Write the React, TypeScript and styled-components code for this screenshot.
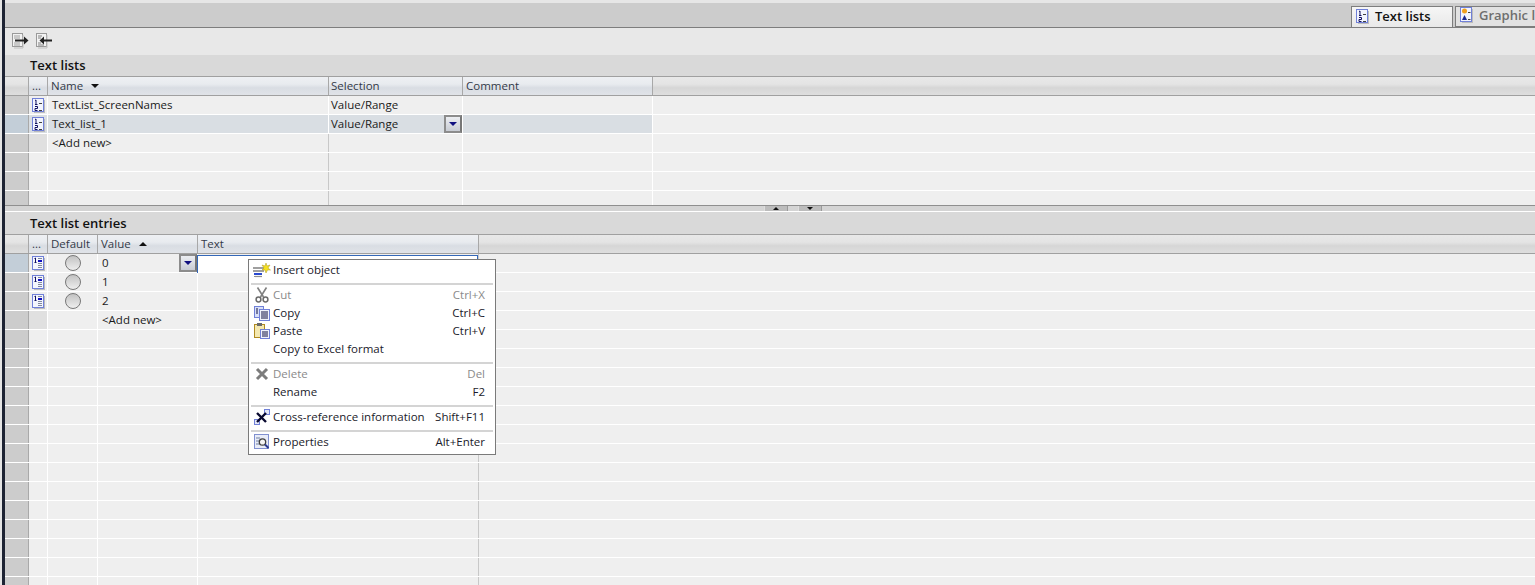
import React from 'react';
import { styled, createGlobalStyle } from 'styled-components';

const GlobalStyle = createGlobalStyle`
  html, body {
    margin: 0;
    padding: 0;
    height: 100%;
    overflow: hidden;
    background: #efefef;
  }
  * { box-sizing: border-box; }
`;

const Page = styled.div`
  position: relative;
  display: flex;
  width: 1535px;
  height: 585px;
  overflow: hidden;
  font-family: 'Open Sans', 'Noto Sans', sans-serif;
  font-size: 11.5px;
  color: #1a1a1a;
`;

const EdgeStripe = styled.div`
  width: 5px;
  flex: none;
  background: #1d2333;
  border-left: 2px solid #e4e4e4;
`;

const Main = styled.div`
  flex: 1;
  min-width: 0;
  display: flex;
  flex-direction: column;
`;

const TabStrip = styled.div`
  height: 28px;
  flex: none;
  background: #cccccc;
  border-top: 3px solid #e6e6e6;
  border-bottom: 1px solid #7d7d7d;
  display: flex;
  justify-content: flex-start;
  align-items: flex-end;
  padding-left: 1346px;
  overflow: hidden;
`;

const Tab = styled.div<{ $active?: boolean }>`
  flex: none;
  height: ${p => (p.$active ? '22px' : '21px')};
  width: ${p => (p.$active ? '102px' : '90px')};
  margin-left: ${p => (p.$active ? '0' : '2px')};
  margin-bottom: ${p => (p.$active ? '-1px' : '0')};
  padding: 0 0 3px 4px;
  display: flex;
  align-items: center;
  gap: 6px;
  font-size: 13px;
  font-weight: 600;
  color: ${p => (p.$active ? '#111111' : '#6e6e6e')};
  background: ${p => (p.$active ? 'linear-gradient(#f6f6f6, #e8e8e8)' : '#e2e2e2')};
  border: 1px solid #7d7d7d;
  border-bottom: ${p => (p.$active ? 'none' : '1px solid #7d7d7d')};
  white-space: nowrap;

  svg {
    flex: none;
  }
`;

const Toolbar = styled.div`
  height: 27px;
  flex: none;
  background: #e8e8e8;
  display: flex;
  align-items: center;
  gap: 7px;
  padding: 0 0 1px 7px;
`;

const SectionTitle = styled.div<{ $lower?: boolean }>`
  height: ${p => (p.$lower ? '22px' : '21px')};
  flex: none;
  background: #d9d9d9;
  padding: ${p => (p.$lower ? '1px' : '0')} 0 0 25px;
  font-size: 13px;
  font-weight: 600;
  line-height: 21px;
  color: #111111;
`;

const HeaderRow = styled.div`
  height: 20px;
  flex: none;
  display: flex;
  border-top: 1px solid #a0a0a0;
  border-bottom: 1px solid #a0a0a0;
  background: linear-gradient(#e8e8e8 0%, #e4e4e4 40%, #d6d6d6 60%, #dedede 100%);
`;

const HeaderCell = styled.div<{ $w: number; $tint?: boolean; $pad?: number }>`
  flex: none;
  width: ${p => p.$w}px;
  height: 100%;
  padding-left: ${p => p.$pad ?? 3}px;
  display: flex;
  align-items: center;
  gap: 8px;
  line-height: 18px;
  color: #333a48;
  border-right: 1px solid #a8a8a8;
  background: ${p => (p.$tint ? 'linear-gradient(#eef0f3 0%, #e8ebef 40%, #d9dde3 60%, #e0e3e8 100%)' : 'transparent')};
`;

const Rows = styled.div<{ $h: number }>`
  height: ${p => p.$h}px;
  flex: none;
  overflow: hidden;
`;

const Row = styled.div`
  height: 19px;
  display: flex;
  border-bottom: 1px solid #ffffff;
  background: #efefef;
`;

const Handle = styled.div<{ $selected?: boolean }>`
  flex: none;
  width: 24px;
  background: ${p => (p.$selected ? '#c3ced8' : '#cccccc')};
  border-right: 1px solid #a9a9a9;
`;

const Cell = styled.div<{ $w: number; $selected?: boolean; $shade?: boolean; $edge?: boolean; $pad?: number }>`
  position: relative;
  flex: none;
  width: ${p => p.$w}px;
  height: 100%;
  padding-left: ${p => p.$pad ?? 3}px;
  display: flex;
  align-items: center;
  line-height: 18px;
  white-space: nowrap;
  border-right: 1px solid ${p => (p.$edge ? '#c8c8c8' : '#ffffff')};
  background: ${p => (p.$selected ? '#d9dee3' : p.$shade ? '#e0e0e0' : '#efefef')};
`;

const CenterCell = styled(Cell)`
  padding-left: 0;
  justify-content: center;
`;

const DropButton = styled.div`
  position: absolute;
  right: 0;
  top: 0;
  width: 18px;
  height: 18px;
  display: flex;
  align-items: center;
  justify-content: center;
  border: 2px solid #8c8c8c;
  border-right-color: #777777;
  background: linear-gradient(#eceef2, #c8ccd4);
`;

const DownMark = styled.div<{ $color?: string }>`
  width: 0;
  height: 0;
  border-left: 4px solid transparent;
  border-right: 4px solid transparent;
  border-top: 4px solid ${p => p.$color ?? '#101080'};
`;

const UpMark = styled.div`
  width: 0;
  height: 0;
  border-left: 4px solid transparent;
  border-right: 4px solid transparent;
  border-bottom: 4px solid #111111;
`;

const Splitter = styled.div`
  height: 7px;
  flex: none;
  background: #d4d4d4;
  border-top: 1px solid #8f8f8f;
  border-bottom: 1px solid #ffffff;
  display: flex;
  justify-content: center;
  gap: 10px;
  padding-left: 46px;
`;

const SplitButton = styled.div`
  width: 24px;
  height: 5px;
  display: flex;
  align-items: center;
  justify-content: center;
  background: #bcbcbc;
  border-left: 1px solid #dddddd;
  border-right: 1px solid #9a9a9a;
`;

const SmallUp = styled.div`
  width: 0;
  height: 0;
  border-left: 3px solid transparent;
  border-right: 3px solid transparent;
  border-bottom: 3px solid #111111;
`;

const SmallDown = styled.div`
  width: 0;
  height: 0;
  border-left: 3px solid transparent;
  border-right: 3px solid transparent;
  border-top: 3px solid #111111;
`;

const Radio = styled.div`
  width: 16px;
  height: 16px;
  border-radius: 50%;
  border: 1px solid #777777;
  background: linear-gradient(#c2c2c2, #eeeeee);
`;

const TextInput = styled.div`
  position: absolute;
  left: -1px;
  top: 1px;
  width: 281px;
  height: 19px;
  background: #ffffff;
  border: 1px solid #3468b8;
`;

const Menu = styled.div`
  position: absolute;
  left: 248px;
  top: 259px;
  width: 248px;
  height: 196px;
  background: #ffffff;
  border: 1px solid #7a7a7a;
  padding: 0 2px;
  color: #1a1a2a;
`;

const MenuItem = styled.div<{ $disabled?: boolean }>`
  height: 18px;
  display: flex;
  align-items: center;
  padding-left: 22px;
  padding-right: 8px;
  position: relative;
  color: ${p => (p.$disabled ? '#8a8a8a' : '#1a1a2a')};
`;

const MenuIcon = styled.span`
  position: absolute;
  left: 2px;
  top: 1px;
  width: 18px;
  height: 18px;
  display: flex;
  align-items: center;
  justify-content: center;
`;

const MenuLabel = styled.span`
  flex: 1;
  white-space: nowrap;
`;

const MenuShortcut = styled.span`
  white-space: nowrap;
`;

const MenuRule = styled.div`
  height: 2px;
  background: #d4d4d4;
  margin-top: 5px;
`;

const NumberedListIcon = () => (
  <svg width="13" height="15" viewBox="0 0 13 15">
    <rect x="0.5" y="0.5" width="11" height="13" fill="#f2f4fd" stroke="#7080d8" />
    <path d="M12 2 H13 V15 H2 V14 H12 Z" fill="#bcbcbc" />
    <path d="M3 2.5 L4 2 V6 M3 6.5 H5.5" stroke="#101060" fill="none" />
    <path d="M3 8.5 H5.5 V10.5 H3 V12.5 H5.5" stroke="#101060" fill="none" />
    <path d="M7 5.5 H10 M7 12.5 H10" stroke="#404040" />
  </svg>
);

const EntryIcon = () => (
  <svg width="13" height="15" viewBox="0 0 13 15">
    <rect x="0.5" y="0.5" width="11" height="13" fill="#f4f6fd" stroke="#7080d8" />
    <path d="M12 2 H13 V15 H2 V14 H12 Z" fill="#bcbcbc" />
    <path d="M2.5 2.5 L3.5 2 V6 M2.5 6.5 H4.5" stroke="#101060" fill="none" />
    <rect x="6" y="4" width="4" height="2" fill="#1010c0" />
    <path d="M6 2.5 H10 M6 7.5 H10 M6 9.5 H10 M6 11.5 H10" stroke="#8088a0" />
  </svg>
);

const GraphicListIcon = () => (
  <svg width="13" height="16" viewBox="0 0 13 16">
    <rect x="0.5" y="0.5" width="11" height="14" fill="#f2f4fd" stroke="#7080d8" />
    <path d="M12 2 H13 V16 H2 V15 H12 Z" fill="#bcbcbc" />
    <circle cx="4.5" cy="4" r="2.5" fill="#f0a020" />
    <path d="M2 13 L4.5 8 L7 13 Z" fill="#1a2a90" />
    <path d="M8 5.5 H10.5 M8 12.5 H10.5" stroke="#404040" />
  </svg>
);

const ExportIcon = () => (
  <svg width="17" height="16" viewBox="0 0 17 16">
    <rect x="0.5" y="0.5" width="10" height="13" fill="#f2f2f2" stroke="#9a9a9a" />
    <path d="M11 2 V15 H2" stroke="#c0c0c0" fill="none" />
    <path d="M2 3 H8 M2 5 H8 M2 10 H8 M2 12 H8" stroke="#a0a0a0" />
    <path d="M3 7.5 H12" stroke="#222222" strokeWidth="2" />
    <path d="M12 3.5 L16.5 7.5 L12 11.5 Z" fill="#222222" />
  </svg>
);

const ImportIcon = () => (
  <svg width="17" height="16" viewBox="0 0 17 16">
    <rect x="0.5" y="0.5" width="10" height="13" fill="#f2f2f2" stroke="#9a9a9a" />
    <path d="M11 2 V15 H2" stroke="#c0c0c0" fill="none" />
    <path d="M2 3 H6 M2 5 H5 M2 10 H5 M2 12 H8" stroke="#808080" />
    <path d="M7 7.5 H16" stroke="#222222" strokeWidth="2" />
    <path d="M8 3.5 L3.5 7.5 L8 11.5 Z" fill="#222222" />
  </svg>
);

const InsertIcon = () => (
  <svg width="18" height="15" viewBox="0 0 18 15">
    <path d="M0 5 H11 M0 8 H11" stroke="#808080" strokeWidth="1.5" />
    <path d="M1 11 H9" stroke="#2a4ad0" strokeWidth="2" />
    <path d="M1 13.5 H9" stroke="#909090" strokeWidth="1.2" />
    <path d="M13 0 L14 3 L17 2 L15 5 L17.5 7 L14.5 7 L13 10 L12 7 L9 7 L11 5 L9 2 L12 3 Z" fill="#f4e020" stroke="#b09a20" strokeWidth="0.5" />
  </svg>
);

const CutIcon = () => (
  <svg width="14" height="16" viewBox="0 0 14 16">
    <path d="M2.5 0.5 L8.5 10 M11.5 0.5 L5.5 10" stroke="#808080" strokeWidth="1.6" fill="none" />
    <circle cx="3.5" cy="12.5" r="2.4" fill="none" stroke="#6a6a6a" strokeWidth="1.5" />
    <circle cx="10.5" cy="12.5" r="2.4" fill="none" stroke="#6a6a6a" strokeWidth="1.5" />
  </svg>
);

const CopyIcon = () => (
  <svg width="16" height="15" viewBox="0 0 16 15">
    <rect x="0.5" y="0.5" width="9" height="11" fill="#d8e0f8" stroke="#7080d8" />
    <path d="M2 3 H4 M2 5 H4 M2 7 H4" stroke="#101040" />
    <rect x="5.5" y="3.5" width="10" height="11" fill="#f0f3fc" stroke="#7080d8" />
    <path d="M7 6 H14 M7 8 H14 M7 10 H14 M7 12 H14" stroke="#101040" />
  </svg>
);

const PasteIcon = () => (
  <svg width="16" height="16" viewBox="0 0 16 16">
    <rect x="0.5" y="1.5" width="10" height="13" fill="#f4e8b0" stroke="#b08a20" />
    <rect x="3" y="0" width="5" height="3" fill="#6a6a6a" />
    <rect x="6.5" y="6.5" width="9" height="9" fill="#f0f3fc" stroke="#7080d8" />
    <path d="M8 9 H14 M8 11 H14 M8 13 H14" stroke="#101040" />
  </svg>
);

const DeleteIcon = () => (
  <svg width="14" height="14" viewBox="0 0 14 14">
    <path d="M2 2 L12 12 M12 2 L2 12" stroke="#7c7c7c" strokeWidth="3" />
  </svg>
);

const CrossRefIcon = () => (
  <svg width="16" height="16" viewBox="0 0 16 16">
    <rect x="10.5" y="0.5" width="5" height="5" fill="#e4e8f8" stroke="#7080d8" />
    <rect x="0.5" y="10.5" width="5" height="5" fill="#e4e8f8" stroke="#7080d8" />
    <path d="M3 4 L12 13 M12 4 L3 13" stroke="#0a0a30" strokeWidth="2.4" />
  </svg>
);

const PropertiesIcon = () => (
  <svg width="16" height="16" viewBox="0 0 16 16">
    <rect x="0.5" y="0.5" width="14" height="14" fill="#e8ecf8" stroke="#8090d0" />
    <path d="M2 4 H6 M2 7 H5 M2 10 H5" stroke="#7080a0" />
    <circle cx="8.5" cy="8" r="3.2" fill="#f4f4f4" stroke="#404040" strokeWidth="1.3" />
    <path d="M11 10.5 L14.5 14" stroke="#2a3a90" strokeWidth="2" />
  </svg>
);

const upperCols = [19, 281, 134, 190];
const lowerCols = [19, 50, 100, 281];

const App: React.FC = () => {
  const upperRows = [
    { name: 'TextList_ScreenNames', selection: 'Value/Range' },
    { name: 'Text_list_1', selection: 'Value/Range', selected: true },
    { name: '<Add new>', selection: '', add: true },
    { name: '', selection: '' },
    { name: '', selection: '' },
    { name: '', selection: '' },
  ];

  const lowerRows = ['0', '1', '2', '<Add new>', ...Array.from({ length: 14 }, () => '')];

  return (
    <Page>
      <GlobalStyle />
      <EdgeStripe />
      <Main>
        <TabStrip>
          <Tab $active>
            <NumberedListIcon />
            Text lists
          </Tab>
          <Tab>
            <GraphicListIcon />
            Graphic lists
          </Tab>
        </TabStrip>

        <Toolbar>
          <ExportIcon />
          <ImportIcon />
        </Toolbar>

        <SectionTitle>Text lists</SectionTitle>
        <HeaderRow>
          <HeaderCell $w={24} />
          <HeaderCell $w={upperCols[0]} $tint>...</HeaderCell>
          <HeaderCell $w={upperCols[1]} $tint>
            Name <DownMark $color="#111111" />
          </HeaderCell>
          <HeaderCell $w={upperCols[2]} $tint $pad={2}>Selection</HeaderCell>
          <HeaderCell $w={upperCols[3]} $tint>Comment</HeaderCell>
        </HeaderRow>
        <Rows $h={109}>
          {upperRows.map((row, i) => (
            <Row key={i}>
              <Handle $selected={row.selected} />
              <Cell $w={upperCols[0]} $selected={row.selected} $shade={row.add}>
                {i < 2 && <NumberedListIcon />}
              </Cell>
              <Cell $w={upperCols[1]} $selected={row.selected} $pad={4} $edge={i >= 2}>{row.name}</Cell>
              <Cell $w={upperCols[2]} $selected={row.selected} $pad={2}>
                {row.selection}
                {row.selected && (
                  <DropButton>
                    <DownMark />
                  </DropButton>
                )}
              </Cell>
              <Cell $w={upperCols[3]} $selected={row.selected} />
            </Row>
          ))}
        </Rows>

        <Splitter>
          <SplitButton><SmallUp /></SplitButton>
          <SplitButton><SmallDown /></SplitButton>
        </Splitter>

        <SectionTitle $lower>Text list entries</SectionTitle>
        <HeaderRow>
          <HeaderCell $w={24} />
          <HeaderCell $w={lowerCols[0]} $tint>...</HeaderCell>
          <HeaderCell $w={lowerCols[1]} $tint>Default</HeaderCell>
          <HeaderCell $w={lowerCols[2]} $tint>
            Value <UpMark />
          </HeaderCell>
          <HeaderCell $w={lowerCols[3]} $tint>Text</HeaderCell>
        </HeaderRow>
        <Rows $h={331}>
          {lowerRows.map((value, i) => (
            <Row key={i}>
              <Handle $selected={i === 0} />
              <Cell $w={lowerCols[0]} $shade={i === 3}>
                {i < 3 && <EntryIcon />}
              </Cell>
              <CenterCell $w={lowerCols[1]}>{i < 3 && <Radio />}</CenterCell>
              <Cell $w={lowerCols[2]} $pad={4}>
                {value}
                {i === 0 && (
                  <DropButton>
                    <DownMark />
                  </DropButton>
                )}
              </Cell>
              <Cell $w={lowerCols[3]} $edge>{i === 0 && <TextInput />}</Cell>
            </Row>
          ))}
        </Rows>
      </Main>

      <Menu>
        <MenuItem>
          <MenuIcon><InsertIcon /></MenuIcon>
          <MenuLabel>Insert object</MenuLabel>
        </MenuItem>
        <MenuRule />
        <MenuItem $disabled>
          <MenuIcon><CutIcon /></MenuIcon>
          <MenuLabel>Cut</MenuLabel>
          <MenuShortcut>Ctrl+X</MenuShortcut>
        </MenuItem>
        <MenuItem>
          <MenuIcon><CopyIcon /></MenuIcon>
          <MenuLabel>Copy</MenuLabel>
          <MenuShortcut>Ctrl+C</MenuShortcut>
        </MenuItem>
        <MenuItem>
          <MenuIcon><PasteIcon /></MenuIcon>
          <MenuLabel>Paste</MenuLabel>
          <MenuShortcut>Ctrl+V</MenuShortcut>
        </MenuItem>
        <MenuItem>
          <MenuLabel>Copy to Excel format</MenuLabel>
        </MenuItem>
        <MenuRule />
        <MenuItem $disabled>
          <MenuIcon><DeleteIcon /></MenuIcon>
          <MenuLabel>Delete</MenuLabel>
          <MenuShortcut>Del</MenuShortcut>
        </MenuItem>
        <MenuItem>
          <MenuLabel>Rename</MenuLabel>
          <MenuShortcut>F2</MenuShortcut>
        </MenuItem>
        <MenuRule />
        <MenuItem>
          <MenuIcon><CrossRefIcon /></MenuIcon>
          <MenuLabel>Cross-reference information</MenuLabel>
          <MenuShortcut>Shift+F11</MenuShortcut>
        </MenuItem>
        <MenuRule />
        <MenuItem>
          <MenuIcon><PropertiesIcon /></MenuIcon>
          <MenuLabel>Properties</MenuLabel>
          <MenuShortcut>Alt+Enter</MenuShortcut>
        </MenuItem>
      </Menu>
    </Page>
  );
};

export default App;
